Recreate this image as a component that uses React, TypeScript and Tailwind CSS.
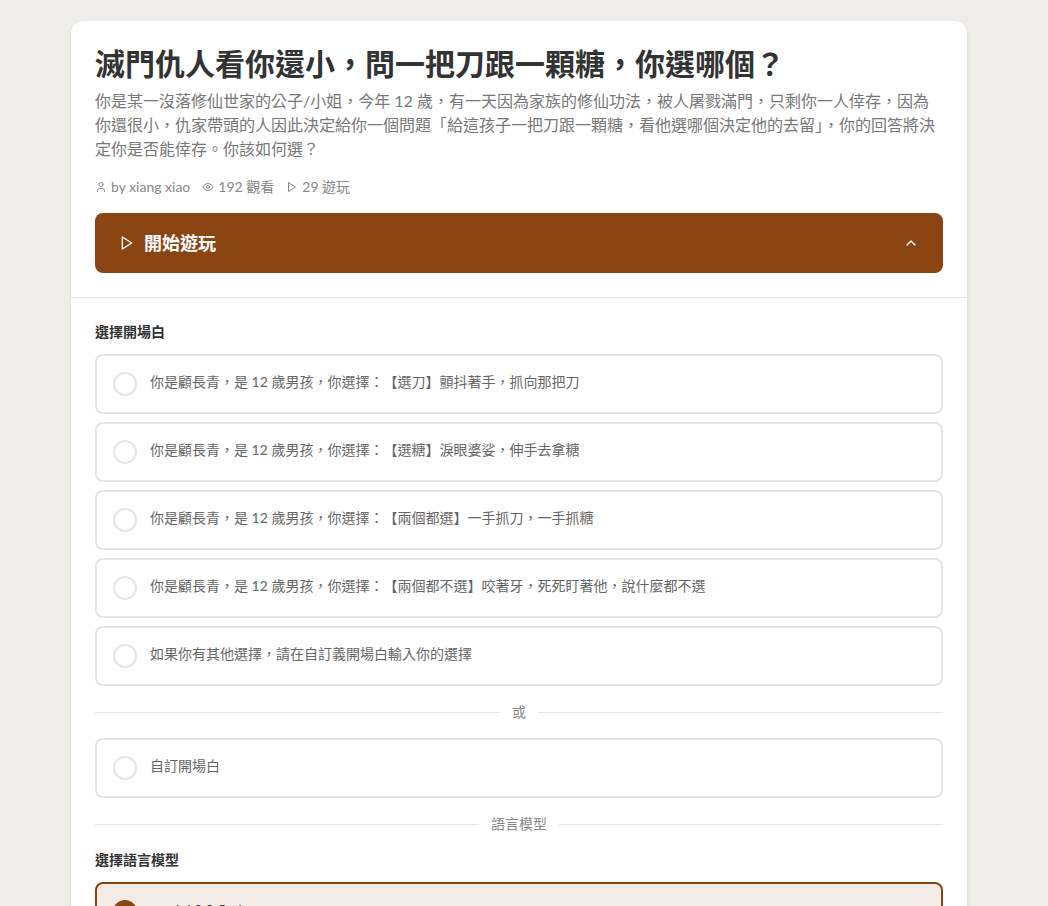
import { User, Eye, ChevronUp } from 'lucide-react';

const OPENINGS = [
  '你是顧長青，是 12 歲男孩，你選擇：【選刀】顫抖著手，抓向那把刀',
  '你是顧長青，是 12 歲男孩，你選擇：【選糖】淚眼婆娑，伸手去拿糖',
  '你是顧長青，是 12 歲男孩，你選擇：【兩個都選】一手抓刀，一手抓糖',
  '你是顧長青，是 12 歲男孩，你選擇：【兩個都不選】咬著牙，死死盯著他，說什麼都不選',
  '如果你有其他選擇，請在自訂義開場白輸入你的選擇',
];

// lucide's current Play has rounded corners, the reference uses the sharp triangle
function PlayIcon({ className }: { className: string }) {
  return (
    <svg
      viewBox="0 0 24 24"
      fill="none"
      stroke="currentColor"
      strokeWidth="2"
      strokeLinecap="round"
      strokeLinejoin="round"
      className={className}
    >
      <polygon points="5 3 19 12 5 21 5 3" />
    </svg>
  );
}

function Option({ label, selected }: { label: string; selected?: boolean }) {
  return (
    <div
      className={`flex h-[60px] items-center gap-3 rounded-lg border-2 px-4 text-sm [text-spacing-trim:space-all] ${
        selected ? 'border-[#8b4513] bg-[#f3ece6] text-[#333333]' : 'border-[#e5e5e5] bg-white text-[#666666]'
      }`}
    >
      <span
        className={`h-6 w-6 shrink-0 rounded-full border-2 ${
          selected ? 'border-[#8b4513] bg-[#8b4513]' : 'border-[#e5e5e5] bg-white'
        }`}
      />
      <span className="-mt-1 ml-[1px]">{label}</span>
    </div>
  );
}

function Divider({ label }: { label: string }) {
  return (
    <div className="flex items-center gap-3 text-sm text-[#888888]">
      <div className="h-px flex-1 bg-[#e5e5e5]" />
      <span>{label}</span>
      <div className="h-px flex-1 bg-[#e5e5e5]" />
    </div>
  );
}

export default function App() {
  return (
    <div
      className="min-h-screen bg-[#eeede9] pt-[21px] pl-[71px]"
      style={{ fontFamily: 'Lato, "Noto Sans CJK TC", sans-serif' }}
    >
      <div className="w-[896px] rounded-xl bg-white shadow-sm">
        {/* header */}
        <div className="border-b border-[#e5e5e5] p-6">
          <h1 className="text-[30px] leading-9 font-bold text-[#333333]">
            滅門仇人看你還小，問一把刀跟一顆糖，你選哪個？
          </h1>
          <p className="mt-2 text-base leading-6 text-[#777777]">
            你是某一沒落修仙世家的公子/小姐，今年 12 歲，有一天因為家族的修仙功法，被人屠戮滿門，只剩你一人倖存，因為你還很小，仇家帶頭的人因此決定給你一個問題「給這孩子一把刀跟一顆糖，看他選哪個決定他的去留」，你的回答將決定你是否能倖存。你該如何選？
          </p>
          <div className="mt-4 flex items-center gap-3 text-sm leading-5 text-[#888888]">
            <span className="flex items-center gap-1">
              <User className="h-3 w-3" />
              by xiang xiao
            </span>
            <span className="flex items-center gap-1">
              <Eye className="h-3 w-3" />
              192 觀看
            </span>
            <span className="flex items-center gap-1">
              <PlayIcon className="h-3 w-3" />
              29 遊玩
            </span>
          </div>
          <div className="mt-4 flex h-[60px] items-center justify-between rounded-lg bg-[#8b4513] px-6 text-white">
            <span className="flex items-center gap-[9px] text-lg font-bold">
              <PlayIcon className="h-4 w-4" />
              開始遊玩
            </span>
            <ChevronUp className="h-4 w-4" />
          </div>
        </div>

        {/* form */}
        <div className="p-6">
          <h2 className="mb-3 text-sm leading-5 font-bold text-[#333333]">選擇開場白</h2>
          <div className="flex flex-col gap-2">
            {OPENINGS.map((label) => (
              <Option key={label} label={label} />
            ))}
          </div>
          <div className="my-4">
            <Divider label="或" />
          </div>
          <Option label="自訂開場白" />
          <div className="my-4">
            <Divider label="語言模型" />
          </div>
          <h2 className="mb-3 text-sm leading-5 font-bold text-[#333333]">選擇語言模型</h2>
          <Option label="gemini 2.0 flash" selected />
        </div>
      </div>
    </div>
  );
}
